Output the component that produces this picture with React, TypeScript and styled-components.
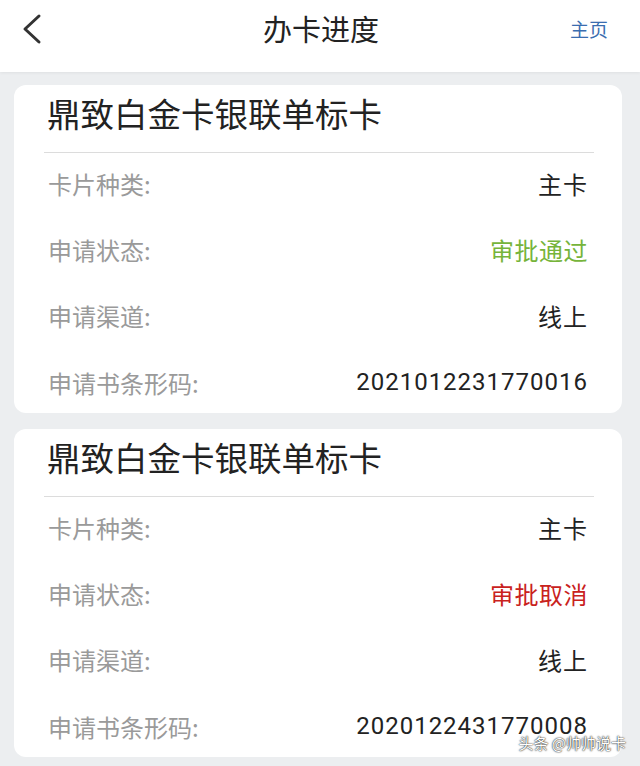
import styled, { createGlobalStyle } from "styled-components";

const GlobalStyle = createGlobalStyle`
  * {
    box-sizing: border-box;
  }
  body {
    margin: 0;
    background-color: #eceef0;
    font-family: Roboto, "Noto Sans CJK SC", sans-serif;
  }
`;

const Page = styled.div`
  position: relative;
  width: 640px;
  height: 766px;
  overflow: hidden;
  background-color: #eceef0;
`;

const Header = styled.header`
  height: 72px;
  background-color: #fff;
  display: flex;
  align-items: center;
  justify-content: space-between;
  padding: 0 32px 0 20px;
  box-shadow: 0 1px 3px rgba(0, 0, 0, 0.06);
  position: relative;
`;

const Back = styled.div`
  width: 40px;
  height: 40px;
  display: flex;
  align-items: center;
  margin-top: -14px;
`;

const Title = styled.h1`
  position: absolute;
  left: 0;
  right: 0;
  top: 7px;
  margin: 0;
  padding-left: 2px;
  text-align: center;
  font-size: 29px;
  font-weight: 400;
  color: #222;
  font-family: "Noto Sans CJK SC", sans-serif;
  pointer-events: none;
`;

const Home = styled.a`
  font-size: 19px;
  color: #3a6db0;
  font-family: "Noto Sans CJK SC", sans-serif;
  margin-top: -16px;
  position: relative;
  z-index: 1;
`;

const List = styled.main`
  display: flex;
  flex-direction: column;
  gap: 16px;
  padding: 13px 18px 0 14px;
`;

const Card = styled.section`
  background-color: #fff;
  border-radius: 12px;
  padding: 0 28px 0 30px;
`;

const CardTitle = styled.h2`
  height: 68px;
  margin: 0;
  padding: 0 0 12px 3px;
  display: flex;
  align-items: center;
  font-size: 33.5px;
  font-weight: 400;
  color: #222;
  font-family: "Noto Sans CJK SC", sans-serif;
  border-bottom: 1px solid #dcdcdc;
`;

const Row = styled.div`
  height: 66px;
  display: flex;
  align-items: center;
  justify-content: space-between;
  padding: 0 6px 6px 4px;

  &:last-child {
    height: 62px;
    padding-bottom: 0;
  }
`;

const Label = styled.span`
  font-size: 24px;
  color: #9a9a9a;
  font-family: "Noto Sans CJK SC", sans-serif;
`;

const Value = styled.span<{ $tone?: "ok" | "cancel" }>`
  font-size: 24px;
  letter-spacing: ${(p) => (p.$tone ? "0.5px" : "1px")};
  font-family: Roboto, "Noto Sans CJK SC", sans-serif;
  color: ${(p) =>
    p.$tone === "ok" ? "#76b43a" : p.$tone === "cancel" ? "#c9221d" : "#222"};
`;

const Watermark = styled.div`
  position: absolute;
  right: 14px;
  bottom: 13px;
  font-size: 15px;
  color: #fff;
  font-family: "Noto Sans CJK SC", sans-serif;
  text-shadow: 0 0 2px rgba(0, 0, 0, 0.8), 0 0 1px rgba(0, 0, 0, 0.9);
`;

type Apply = {
  name: string;
  kind: string;
  status: string;
  tone: "ok" | "cancel";
  channel: string;
  code: string;
};

const applies: Apply[] = [
  {
    name: "鼎致白金卡银联单标卡",
    kind: "主卡",
    status: "审批通过",
    tone: "ok",
    channel: "线上",
    code: "2021012231770016",
  },
  {
    name: "鼎致白金卡银联单标卡",
    kind: "主卡",
    status: "审批取消",
    tone: "cancel",
    channel: "线上",
    code: "2020122431770008",
  },
];

export default function App() {
  return (
    <Page>
      <GlobalStyle />
      <Header>
        <Back>
          <svg width="24" height="32" viewBox="0 0 24 32">
            <path
              d="M19 3 L5 16 L19 29"
              fill="none"
              stroke="#333"
              strokeWidth="3"
              strokeLinecap="round"
              strokeLinejoin="round"
            />
          </svg>
        </Back>
        <Title>办卡进度</Title>
        <Home>主页</Home>
      </Header>
      <List>
        {applies.map((a, i) => (
          <Card key={i}>
            <CardTitle>{a.name}</CardTitle>
            <Row>
              <Label>卡片种类:</Label>
              <Value>{a.kind}</Value>
            </Row>
            <Row>
              <Label>申请状态:</Label>
              <Value $tone={a.tone}>{a.status}</Value>
            </Row>
            <Row>
              <Label>申请渠道:</Label>
              <Value>{a.channel}</Value>
            </Row>
            <Row>
              <Label>申请书条形码:</Label>
              <Value>{a.code}</Value>
            </Row>
          </Card>
        ))}
      </List>
      <Watermark>头条 @帅帅说卡</Watermark>
    </Page>
  );
}
